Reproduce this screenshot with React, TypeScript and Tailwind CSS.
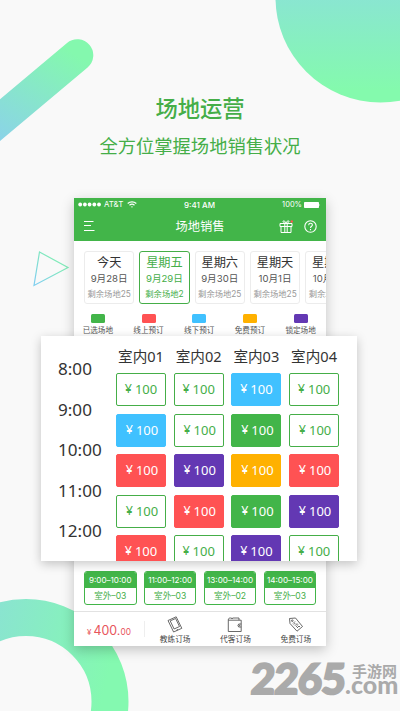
import React from "react";
import clsx from "clsx";

type SlotState = "free" | "selected" | "online" | "offline" | "gift" | "locked";

const slotStyles: Record<SlotState, string> = {
  free: "bg-white border-[#45ae48] text-[#45ae48]",
  selected: "bg-[#42b549] border-[#42b549] text-white",
  online: "bg-[#ff5253] border-[#ff5253] text-white",
  offline: "bg-[#40c1ff] border-[#40c1ff] text-white",
  gift: "bg-[#ffb100] border-[#ffb100] text-white",
  locked: "bg-[#6338b3] border-[#6338b3] text-white",
};

const days = [
  { name: "今天", date: "9月28日", left: "剩余场地25" },
  { name: "星期五", date: "9月29日", left: "剩余场地2", active: true },
  { name: "星期六", date: "9月30日", left: "剩余场地25" },
  { name: "星期天", date: "10月1日", left: "剩余场地25" },
  { name: "星期一", date: "10月2日", left: "剩余场地25" },
];

const legend = [
  { label: "已选场地", color: "bg-[#42b549]" },
  { label: "线上预订", color: "bg-[#ff5253]" },
  { label: "线下预订", color: "bg-[#40c1ff]" },
  { label: "免费预订", color: "bg-[#ffb100]" },
  { label: "锁定场地", color: "bg-[#6338b3]" },
];

const times = ["8:00", "9:00", "10:00", "11:00", "12:00"];
const courts = ["室内01", "室内02", "室内03", "室内04"];

const slots: SlotState[][] = [
  ["free", "free", "offline", "free"],
  ["offline", "free", "selected", "free"],
  ["online", "locked", "gift", "online"],
  ["free", "online", "selected", "locked"],
  ["online", "free", "locked", "free"],
];

const bookings = [
  { time: "9:00–10:00", court: "室外–03" },
  { time: "11:00–12:00", court: "室外–03" },
  { time: "13:00–14:00", court: "室外–02" },
  { time: "14:00–15:00", court: "室外–03" },
];

function Backdrop() {
  return (
    <svg className="absolute inset-0" width="400" height="711" viewBox="0 0 400 711" fill="none">
      <defs>
        <linearGradient id="bar" gradientUnits="userSpaceOnUse" x1="60" y1="45" x2="0" y2="141">
          <stop stopColor="#84f8ae" />
          <stop offset="1" stopColor="#8bd3e8" />
        </linearGradient>
        <linearGradient id="disc" gradientUnits="userSpaceOnUse" x1="0" y1="-10" x2="0" y2="90">
          <stop stopColor="#8ae4d4" />
          <stop offset="1" stopColor="#84faad" />
        </linearGradient>
        <linearGradient id="ring" gradientUnits="userSpaceOnUse" x1="-10" y1="640" x2="110" y2="670">
          <stop stopColor="#8ae4d0" />
          <stop offset="1" stopColor="#84f9b0" />
        </linearGradient>
        <linearGradient id="tri" gradientUnits="userSpaceOnUse" x1="36" y1="282" x2="56" y2="262">
          <stop stopColor="#7fcfee" />
          <stop offset="1" stopColor="#80eab9" />
        </linearGradient>
      </defs>
      <path d="M-20 136.8 77.3 55.2" stroke="url(#bar)" strokeWidth="32" strokeLinecap="round" />
      <circle cx="380.5" cy="-2.5" r="105" fill="url(#disc)" />
      <circle cx="26" cy="701.5" r="84" stroke="url(#ring)" strokeWidth="37" />
      <path d="M39.5 252 68 267.5 34 285.5Z" stroke="url(#tri)" strokeWidth="1.2" />
    </svg>
  );
}

function StatusBar() {
  return (
    <div className="flex h-[13px] items-center justify-between pl-1 pr-[5px] font-['Inter','Liberation_Sans',sans-serif] text-[7px] leading-none">
      <div className="flex w-[80px] items-center">
        <svg width="24" height="5" viewBox="0 0 24 5" fill="#fff">
          {[2.2, 6.9, 11.6, 16.3, 21].map((cx) => (
            <circle key={cx} cx={cx} cy="2.5" r="1.9" />
          ))}
        </svg>
        <span className="ml-[2px] text-[7.9px]">AT&amp;T</span>
        <svg className="ml-1" width="10" height="7" viewBox="0 0 10 7" fill="none" stroke="#fff" strokeWidth="1.2">
          <path d="M.7 2.5C3.1.3 6.9.3 9.3 2.5M2.5 4.3C4 3 6 3 7.5 4.3" />
          <path d="M5 6.7 3.9 5.5H6.1Z" fill="#fff" stroke="none" />
        </svg>
      </div>
      <span className="text-[8px] font-medium">9:41 AM</span>
      <div className="flex w-[80px] items-center justify-end">
        <span className="text-[7.5px]">100%</span>
        <svg className="ml-[2px]" width="17" height="6" viewBox="0 0 17 6" fill="#fff">
          <rect width="15" height="6" rx=".8" />
          <path d="M15.5 2Q16.8 3 15.5 4Z" />
        </svg>
      </div>
    </div>
  );
}

function TitleBar() {
  return (
    <div className="grid h-[30px] grid-cols-[80px_1fr_80px] items-center px-[9px]">
      <svg width="12" height="10" viewBox="0 0 12 10" stroke="#fff" strokeWidth="1">
        <path d="M1 .5h9.5M1 4.500h7M1 9.5h10.5" />
      </svg>
      <span className="text-center text-[12.3px] leading-none">场地销售</span>
      <div className="flex items-center justify-end gap-[11px]">
        <svg width="14" height="13" viewBox="0 0 14 13" fill="none" stroke="#fff" strokeWidth="1">
          <path d="M1 3.5h12v3H1ZM2 6.5h10v6H2ZM5.8 3.5v9M8.2 3.5v9M7 3.5C5 3 3.5 2 4.2 1 5 .2 6.5 1.5 7 3.5 7.5 1.5 9 .2 9.8 1 10.5 2 9 3 7 3.5" />
          <circle cx="12.8" cy="1.5" r="1.2" fill="#ff5253" stroke="none" />
        </svg>
        <svg width="13" height="13" viewBox="0 0 13 13" fill="none" stroke="#fff" strokeWidth="1.1">
          <circle cx="6.5" cy="6.5" r="5.7" />
          <path d="M4.7 5.2C4.7 2.6 8.4 2.8 8.4 5 8.4 6.3 6.5 6.3 6.5 8M6.5 9v1.2" />
        </svg>
      </div>
    </div>
  );
}

function DayTabs() {
  return (
    <div className="flex gap-[5px] overflow-hidden pl-[10px] pt-[10px]">
      {days.map((day) => (
        <div
          key={day.date}
          className={clsx(
            "flex h-[53px] w-[50.3px] shrink-0 flex-col items-center whitespace-nowrap rounded-[3px] border",
            day.active ? "border-[#45ae48] text-[#45ae48]" : "border-[#ececec] text-[#333]"
          )}
        >
          <span className="mt-[3px] text-[12.2px] leading-[14px]">{day.name}</span>
          <span className={clsx("mt-[4px] font-['Inter','Noto_Sans_CJK_SC',sans-serif] text-[9.6px] leading-[12px]", !day.active && "text-[#555]")}>
            {day.date}
          </span>
          <span className={clsx("mt-[4px] font-['Inter','Noto_Sans_CJK_SC',sans-serif] text-[8.3px] leading-[10px]", !day.active && "text-[#999]")}>
            {day.left}
          </span>
        </div>
      ))}
    </div>
  );
}

function Legend() {
  return (
    <div className="-ml-[1.5px] mt-[10px] grid grid-cols-[repeat(5,50.7px)]">
      {legend.map((item) => (
        <div key={item.label} className="flex flex-col items-center">
          <span className={clsx("h-[9px] w-[14px] rounded-[1.5px]", item.color)} />
          <span className="mt-[2px] whitespace-nowrap text-[7.6px] leading-[9px] text-[#555]">{item.label}</span>
        </div>
      ))}
    </div>
  );
}

function Slot({ state, row }: { state: SlotState; row: number }) {
  return (
    <div
      className={clsx(
        "flex h-[33px] w-[50px] items-center justify-center rounded-[2px] border font-['Noto_Sans','Noto_Sans_CJK_SC',sans-serif] text-[13px] leading-none",
        row > 0 && row < 4 && "pl-[2px]",
        slotStyles[state]
      )}
    >
      <span className="mr-[3px] text-[12.5px]">¥</span>
      <span>100</span>
    </div>
  );
}

function SchedulePanel() {
  return (
    <section className="absolute left-[41px] top-[336px] flex h-[225px] w-[316px] overflow-hidden bg-white font-['Noto_Sans','Noto_Sans_CJK_SC',sans-serif] text-[#333] shadow-[0_3px_10px_rgba(0,0,0,0.22)]">
      <div className="flex w-[75px] shrink-0 flex-col pl-[17px] pt-[12px] text-[17.1px]">
        {times.map((time) => (
          <span key={time} className="h-[40.6px] leading-[41px]">{time}</span>
        ))}
      </div>
      <div>
        <div className="grid h-[37px] grid-cols-[repeat(4,57.7px)] pt-[10px] text-[14.6px] leading-[20px]">
          {courts.map((court) => (
            <span key={court} className="w-[50px] whitespace-nowrap text-center">{court}</span>
          ))}
        </div>
        <div className="grid grid-cols-[repeat(4,57.7px)] gap-y-[7.5px]">
          {slots.map((line, row) =>
            line.map((state, col) => <Slot key={`${row}-${col}`} state={state} row={row} />)
          )}
        </div>
      </div>
    </section>
  );
}

function BookingCards() {
  return (
    <div className="flex h-[41px] gap-[7.4px] pl-[10px] pt-px font-['Inter','Noto_Sans_CJK_SC',sans-serif]">
      {bookings.map((booking) => (
        <div key={booking.time} className="h-[34px] w-[52.5px] overflow-hidden whitespace-nowrap rounded-[3px] border border-[#42b549] text-center">
          <div className="h-[15.5px] bg-[#42b549] text-[8.1px] leading-[16px] text-white">{booking.time}</div>
          <div className="text-[8.6px] leading-[17px] text-[#45ae48]">{booking.court}</div>
        </div>
      ))}
    </div>
  );
}

function ActionBar() {
  return (
    <div className="flex h-[35px] border-t border-[#e2e2e2] text-[7.7px] text-[#444]">
      <div className="my-[9px] flex w-[71px] items-baseline justify-center border-r border-[#eee] font-['Inter','Liberation_Sans',sans-serif] leading-[20px] text-[#e8555c]">
        <span className="mr-[2px] text-[8px]">¥</span>
        <span className="text-[12.4px]">400.</span>
        <span className="text-[8.3px]">00</span>
      </div>
      <div className="flex flex-1 flex-col items-center pt-[4px]">
        <svg width="16" height="17" viewBox="0 0 16 17" fill="none" stroke="#444" strokeWidth=".8" strokeLinejoin="round">
          <path d="m1 4.5 8.2-3.7 5.6 11.5-8.2 3.7ZM3.2 4.9l5.4-2.4 3.9 8-5.4 2.5ZM9.5 14.2l1.5-.7" />
        </svg>
        <span className="leading-[11px]">教练订场</span>
      </div>
      <div className="flex flex-1 flex-col items-center pt-[4px]">
        <svg width="16" height="17" viewBox="0 0 16 17" fill="none" stroke="#444" strokeWidth=".8" strokeLinejoin="round">
          <path d="M1.3 4.2h12.9v11.3H1.3ZM1.3 4.2C1.3 2.5 2 2 3.5 2h1l.5 1 .6-1H12v2.2M14.2 8h-2.5q-1.5 1.5 0 3h2.5" />
          <circle cx="12.5" cy="9.5" r=".4" />
        </svg>
        <span className="leading-[11px]">代客订场</span>
      </div>
      <div className="flex flex-1 flex-col items-center pt-[4px]">
        <svg width="16" height="17" viewBox="0 0 16 17" fill="none" stroke="#444" strokeWidth=".8" strokeLinejoin="round">
          <path d="M1.5 2.5 7.5 2l7 8.5L9 15.200 2 7.500Z" />
          <circle cx="4.3" cy="4.7" r=".8" />
          <path d="m5 7.5 2-2M5.8 8.5l1.500-1.500M7 9.700l2-2 1 1M8 10.800l1.500-1.300M9 12l2-2 1 1" />
        </svg>
        <span className="leading-[11px]">免费订场</span>
      </div>
    </div>
  );
}

function Watermark() {
  return (
    <div className="absolute left-[251px] top-[656px] flex h-[44px] w-[149px] whitespace-nowrap font-['Lato','Noto_Sans_CJK_SC',sans-serif] font-bold text-[#aaa]">
      <span className="w-[95px] -skew-x-3 text-[42px] font-black leading-[44px] tracking-[-0.8px] [-webkit-text-stroke:2px_#aaa]">2265</span>
      <div className="flex flex-col pt-[8px]">
        <span className="pl-[6px] text-[15px] leading-[15px]">手游网</span>
        <span className="-ml-px mt-[-3px] text-[25px] font-black leading-[16px]">.com</span>
      </div>
    </div>
  );
}

export default function App() {
  return (
    <main className="relative h-[711px] w-[400px] overflow-hidden bg-[#f9f9f9] font-['Noto_Sans_CJK_SC',sans-serif]">
      <Backdrop />
      <header className="relative flex h-[198px] flex-col items-center pt-[94px] text-[#45ae48]">
        <h1 className="text-[22.3px] font-medium leading-[26px]">场地运营</h1>
        <p className="mt-[12px] text-[18.3px] leading-[26px]">全方位掌握场地销售状况</p>
      </header>

      <section className="relative ml-[74px] flex h-[448px] w-[252px] flex-col bg-white shadow-[0_4px_12px_rgba(0,0,0,0.22)]">
        <div className="h-[43px] bg-[#42b549] text-white">
          <StatusBar />
          <TitleBar />
        </div>
        <DayTabs />
        <Legend />
        <div className="mt-auto">
          <BookingCards />
          <ActionBar />
        </div>
      </section>

      <SchedulePanel />
      <Watermark />
    </main>
  );
}
